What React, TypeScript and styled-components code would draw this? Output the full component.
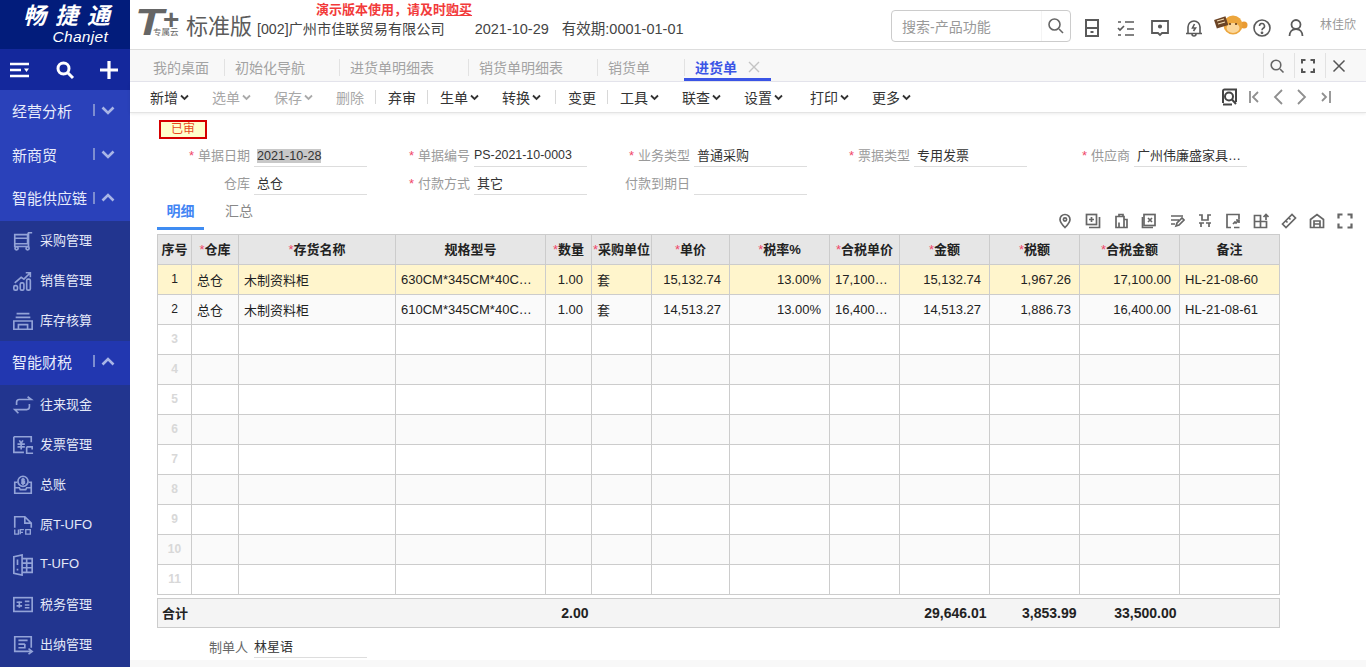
import React from 'react';
import styled, { createGlobalStyle } from 'styled-components';

const Global = createGlobalStyle`
  html, body { margin: 0; padding: 0; height: 100%; overflow: hidden; background: #fff; }
  body { font-family: "Liberation Sans", "Noto Sans CJK SC", sans-serif; font-size: 13px; color: #333; }
  #root { height: 100%; }
  * { box-sizing: border-box; }
`;

const Page = styled.div`display: flex; width: 1366px; height: 667px; overflow: hidden;`;

/* ---------- Sidebar ---------- */
const Sidebar = styled.aside`width: 130px; flex: none; background: #22358f; display: flex; flex-direction: column; color: #e6eafa;`;
const BrandBox = styled.div`
  height: 49px; background: #021c7b; color: #fff; display: flex; flex-direction: column; align-items: flex-end; padding: 3px 20px 0 0;
`;
const BrandCn = styled.div`font-size: 23px; line-height: 26px; font-style: italic; letter-spacing: 9px; margin-right: -9px; font-weight: 700; white-space: nowrap;`;
const BrandEn = styled.div`font-size: 15.500px; line-height: 15px; font-style: italic; margin-right: 2px; letter-spacing: 0.3px;`;
const ToolStrip = styled.div`height: 41px; background: #14289c; display: flex; align-items: center; justify-content: space-between; padding: 0 11px 0 10px;`;
const GroupRow = styled.div<{ $h: number; $bg: string }>`
  height: ${p => p.$h}px; background: ${p => p.$bg}; display: flex; align-items: center; padding: 0 15px 4px 12px; font-size: 15px; color: #e8ecfb;
`;
const GroupName = styled.span`flex: 1; white-space: nowrap;`;
const GroupDivider = styled.i`width: 2px; height: 12px; background: #7d8dd0; margin-right: 6px;`;
const SubRow = styled.div`height: 40px; display: flex; align-items: center; padding: 0 0 4px 12px; font-size: 13px; color: #e4e8f8; gap: 6px; white-space: nowrap;`;
const SubIcon = styled.svg`width: 22px; height: 22px; flex: none; fill: none; stroke: #93a3d8; stroke-width: 1.800; margin-top: 4px;`;

/* ---------- Main ---------- */
const Main = styled.main`flex: 1; min-width: 0; display: flex; flex-direction: column;`;
const Header = styled.header`height: 49px; flex: none; display: flex; align-items: flex-start; position: relative; background: #fff;`;
const TLogo = styled.div`width: 52px; margin-left: 5px; height: 36px; position: relative; flex: none; color: #666; margin-top: 7px;`;
const TLetter = styled.span`font: italic 700 36px/32px "Liberation Sans", sans-serif; color: #666; position: absolute; left: 0; top: 0; transform: scaleX(1.300); transform-origin: left center;`;
const TPlus = styled.span`font: 900 28px/20px "Liberation Sans", sans-serif; color: #666; position: absolute; left: 28px; top: 3px;`;
const TTag = styled.span`font-size: 8.500px; line-height: 9px; color: #666; position: absolute; left: 18px; top: 21px; white-space: nowrap;`;
const Edition = styled.div`font-size: 22px; line-height: 26px; color: #5c5c5c; margin: 14px 0 0 -1px; white-space: nowrap;`;
const InfoBlock = styled.div`margin-left: 5px; padding-top: 19px; font-size: 14.200px; line-height: 20px; color: #444; white-space: nowrap; display: flex;`;
const InfoDate = styled.span<{ $ml: number }>`margin-left: ${p => p.$ml}px; font-size: 14.500px;`;
const DemoNote = styled.div`position: absolute; left: 186px; top: 2px; color: #f23a3a; font-size: 13px; font-weight: 700; line-height: 16px; white-space: nowrap;`;
const DemoLink = styled.u``;
const HeaderRight = styled.div`margin-left: auto; display: flex; align-items: center; height: 49px; padding: 3px 10px 0 0;`;
const SearchBox = styled.div`
  width: 180px; height: 32px; border: 1px solid #ccc; border-radius: 4px; display: flex; align-items: center; padding-left: 10px; color: #999; font-size: 14px; margin-right: 11px;
`;
const SearchText = styled.span`flex: 1;`;
const SearchBtn = styled.div`width: 29px; height: 30px; display: flex; align-items: center; justify-content: center; border-left: 1px solid #f4f4f4;`;
const HeadIcon = styled.svg<{ $mr?: number }>`width: 20px; height: 20px; flex: none; fill: none; stroke: #5a5a5a; stroke-width: 1.600; margin: 3px ${p => p.$mr ?? 14}px 0 0;`;
const UserName = styled.span`font-size: 12px; color: #999; margin: -5px 0 0 14px; white-space: nowrap;`;

const TabBar = styled.nav`height: 33px; flex: none; background: #f8f8f8; border-top: 1px solid #ddd; border-bottom: 1px solid #e6e6ee; display: flex; align-items: stretch; padding-left: 23px; position: relative;`;
const Tab = styled.div<{ $w: number; $active?: boolean }>`
  width: ${p => p.$w}px; flex: none; display: flex; align-items: center; padding: 5px 0 0 11px; font-size: 14px; white-space: nowrap;
  color: ${p => (p.$active ? '#3b55e6' : '#a3a3a3')}; font-weight: ${p => (p.$active ? 700 : 400)}; position: relative;
  border-bottom: ${p => (p.$active ? '3px solid #3b55e6' : '3px solid transparent')};
  &::before { content: ''; position: absolute; left: 0; top: 9px; height: 17px; width: 1px; background: #e2e2e2; }
  &:first-child { padding-left: 0; width: 71px; }
  &:first-child::before { display: none; }
`;
const TabClose = styled.span`margin-left: 11px; display: flex;`;
const TabTools = styled.div`margin-left: auto; display: flex; padding-right: 10px; align-items: center;`;
const TabTool = styled.div`width: 31px; height: 25px; border-left: 1px solid #e2e2e2; display: flex; align-items: center; justify-content: center; padding-right: 4px;`;

const Toolbar = styled.div`height: 31px; flex: none; background: #fff; display: flex; align-items: center; padding-left: 20px; border-bottom: 1px solid #e4e4e4; box-shadow: 0 1px 3px rgba(0,0,0,.08); position: relative; z-index: 1;`;
const ToolItem = styled.div<{ $off?: boolean; $mr?: number }>`
  display: flex; align-items: center; gap: 2px; font-size: 14px; white-space: nowrap; color: ${p => (p.$off ? '#a8a8a8' : '#333')}; margin-right: ${p => p.$mr ?? 23}px;
`;
const ToolSep = styled.i`width: 1px; height: 14px; background: #d8d8d8; margin-right: 12px;`;
const PagerBox = styled.div`margin-left: auto; display: flex; align-items: center; gap: 8px; padding-right: 32px;`;
const Chevron = styled.svg<{ $off?: boolean }>`width: 9px; height: 7px; fill: none; stroke: ${p => (p.$off ? '#aaa' : '#333')}; stroke-width: 1.800;`;
const PagerIcon = styled.svg`width: 16px; height: 18px; fill: none; stroke: #8f8f8f; stroke-width: 1.800;`;

const Content = styled.section`flex: 1; min-height: 0; padding: 7px 0 0 27px; background: #fff; overflow: hidden;`;
const Stamp = styled.div`
  width: 48px; height: 19px; margin-left: 2px; border: 2px solid #d60000; background: #ffffcc; color: #e8471c; font-size: 12px; line-height: 15px; text-align: center;
`;
const FormGrid = styled.div`display: grid; grid-template-columns: repeat(5, 220px); grid-auto-rows: 24px; row-gap: 4px; margin: 4px 0 0 -10px;`;
const Field = styled.div`display: flex; align-items: flex-end; height: 24px;`;
const FieldLabel = styled.label`width: 103px; flex: none; text-align: right; font-size: 13px; color: #9a9a9a; line-height: 22px; white-space: nowrap;`;
const Star = styled.span`color: #f0476a; margin-right: 4px;`;
const FieldValue = styled.div<{ $small?: boolean }>`
  width: 113px; margin-left: 4px; height: 24px; border-bottom: 1px solid #ddd;
  padding: ${p => (p.$small ? '3px 0 0 0' : '4px 0 0 3px')}; font-size: ${p => (p.$small ? 12.400 : 13)}px; line-height: 18px; color: #333; white-space: nowrap; overflow: hidden; text-overflow: ellipsis;
`;
const Selected = styled.span`background: #c8c8c8; color: #333; font-size: 12.600px;`;

const TabStrip = styled.div`height: 31px; margin-top: 4px; display: flex; padding-right: 13px; align-items: flex-end;`;
const DetailTab = styled.div<{ $on?: boolean }>`
  width: ${p => (p.$on ? 47 : 48)}px; margin-right: ${p => (p.$on ? 21 : 0)}px; height: 27px; padding-bottom: 7px; font-size: 14px; line-height: 17px; text-align: ${p => (p.$on ? 'center' : 'left')}; color: ${p => (p.$on ? '#4285f4' : '#888')}; font-weight: ${p => (p.$on ? 700 : 400)};
  border-bottom: ${p => (p.$on ? '3px solid #3f8cf2' : '3px solid transparent')};
`;
const GridTools = styled.div`margin-left: auto; display: flex; gap: 12px; padding-bottom: 1px; align-self: flex-end;`;
const ToolGlyph = styled.svg`width: 16px; height: 16px; fill: none; stroke: #666; stroke-width: 1.700;`;

const DataTable = styled.table`width: 1123px; table-layout: fixed; border-collapse: collapse; margin-top: 4px; font-size: 13px; color: #222;`;
const Th = styled.th`height: 30px; background: #e6e6e6; border: 1px solid #ccc; padding: 0 0 2px; font-weight: 700; font-size: 13px; color: #222; white-space: nowrap; overflow: hidden;`;
const HStar = styled.span`color: #f0476a; font-weight: 400;`;
const Tr = styled.tr<{ $bg: string }>`background: ${p => p.$bg};`;
const Td = styled.td<{ $align?: string }>`
  height: 30px; border: 1px solid #ccc; padding: 0 ${p => (p.$align === 'right' ? 8 : 5)}px 1px 5px; text-align: ${p => p.$align ?? 'left'}; font-size: 13px; white-space: nowrap; overflow: hidden; text-overflow: ellipsis; color: #222;
`;
const NumCell = styled.td<{ $dim?: boolean }>`
  height: 30px; border: 1px solid #ccc; padding: 0 0 1px; text-align: center; font-size: 12px; color: ${p => (p.$dim ? '#d8d8d8' : '#222')}; font-weight: ${p => (p.$dim ? 700 : 400)};
`;
const TotalTable = styled.table`width: 1123px; table-layout: fixed; border-collapse: collapse; margin-top: 3px; background: #f4f4f4; border: 1px solid #ccc;`;
const TotalCell = styled.td`
  height: 29px; padding: 0 2px 1px 4px; text-align: left; font-size: 13px; font-weight: 700; color: #222; white-space: nowrap;
`;
const TotalNum = styled(TotalCell)`text-align: right; font-size: 14px; padding-right: 3px;`;
const FooterField = styled.div`display: flex; align-items: flex-end; margin: 9px 0 0 0; height: 21px;`;
const FooterLabel = styled.span`width: 91px; text-align: right; font-size: 13px; color: #666; line-height: 18px; padding-bottom: 1px;`;
const FooterValue = styled.div`width: 113px; margin-left: 6px; border-bottom: 1px solid #ddd; font-size: 13px; color: #333; line-height: 20px; height: 21px;`;
const BottomStrip = styled.div`height: 7px; flex: none; background: #f8f8f8;`;

const MonkeyBox = styled.svg`width: 34px; height: 24px; flex: none; margin: 0 4px 0 2px;`;

/* ---------- Small drawings ---------- */
const Down = ({ off }: { off?: boolean }) => <Chevron $off={off} viewBox="0 0 9 7"><path d="M1 1.500l3.500 3.500L8 1.500" /></Chevron>;
const G = styled.svg`width: 14px; height: 9px; fill: none; stroke: #a9b5e6; stroke-width: 2.600;`;
const GroupChev = ({ up }: { up?: boolean }) => <G viewBox="0 0 14 9"><path d={up ? 'M1.500 7.500L7 2l5.500 5.500' : 'M1.500 1.500L7 7l5.500-5.500'} /></G>;

const subIcons: Record<string, React.ReactNode> = {
  cart: <><path d="M3 5h14v10H3zM3 9h14M17 5l1-2h4M3 15v3h15v-15" /><circle cx="5" cy="20" r="1.700" /><circle cx="17" cy="20" r="1.700" /></>,
  chart: <><path d="M3 14l7-6 3 2 7-7M15 3h5v5" /><rect x="2" y="17" width="4" height="5" rx="1.500" /><rect x="9" y="14" width="4" height="8" rx="1.500" /><rect x="16" y="10" width="4" height="12" rx="1.500" /></>,
  stock: <><path d="M5 4h14M4 8h16M2 12h20v9H2zM7 21v-5h10v5" /></>,
  loop: <><path d="M5 12V9a3 3 0 0 1 3-3h13l-4-3M19 11v3a3 3 0 0 1-3 3H3l4 4" /></>,
  inv: <><path d="M2 3h19v6M2 3v17h11M8 7l2 3 2-3M6 11h8M6 14h8M10 10v7M16 14h6v3M16 14v7h7" /></>,
  ledger: <><path d="M6 9H3v12h18V9h-3M3 15h5l1 2h6l1-2h5" /><circle cx="12" cy="8" r="5.500" /><path d="M14 6h-3v2h2.500v2H10M12 4v8" /></>,
  ufo: <><path d="M3 15V3h11l7 7v5M14 3v7h7" /><path d="M3 17v5h4v-5M9 22v-5h4M9 20h3M15 17h5v5h-5z" strokeWidth="1.500" /></>,
  tufo: <><path d="M2 3l9-2v22l-9-2zM11 5h11v15H11M11 10h11M11 15h11M16 5v15M6 6v6M6 16v2" /></>,
  tax: <><rect x="2" y="4" width="20" height="15" /><path d="M5 9h6M5 13h6M14 8h5M14 12h5M14 15h5M8 8v7" /></>,
  cash: <><path d="M21 15V3H3v16h12M7 7h10M7 11h7M7 15h7v-4M15 19h7M18 16l4 3-4 3" /></>,
};
const SubItem = ({ icon, label }: { icon: string; label: string }) => (
  <SubRow><SubIcon viewBox="0 0 24 24">{subIcons[icon]}</SubIcon>{label}</SubRow>
);

const gridIcons = [
  <><path d="M8 1.500a5 5 0 0 1 5 5c0 3-5 8-5 8s-5-5-5-8a5 5 0 0 1 5-5z" /><circle cx="8" cy="6.500" r="1.600" /></>,
  <><rect x="1.500" y="1.500" width="10" height="10" /><path d="M4 14.500h10.500V4M4 6.500h5M6.500 4v5" /></>,
  <><path d="M6 3.500V1.500h4v2M3 3.500h8v11H3zM11 6.500h3v8H6v-5" /></>,
  <><rect x="3" y="1.500" width="11" height="11" /><path d="M1.500 4v10.500H12M7 5l4 4M11 5L7 9" /></>,
  <><path d="M2 3h12M2 7h8M2 11h4M7 13l1-3 5-5 2 2-5 5z" /></>,
  <><path d="M2 2h3v5h6V2h3M2 10h5M9 10h5M4 14v-4M12 14v-4" /></>,
  <><path d="M14 6V1.500H2v13h4M8 11l2-2 1 1 3-3M11 7h3v3M9 14.500h5.500" /></>,
  <><path d="M1.500 2.500h6v12h-6zM1.500 8.500h12v6h-6M13 7V1.500M10.500 4L13 1.500 15.500 4" /></>,
  <><path d="M1.500 11L11 1.500l3.500 3.500L5 14.500zM5 8l1.500 1.500M8 5l1.500 1.500" /></>,
  <><path d="M1.500 6.500L8 1.500l6.500 5v8h-13zM5 8h6v6.500H5zM5 11h6" /></>,
  <><path d="M1.500 5.500v-4h4M10.500 1.500h4v4M14.500 10.500v4h-4M5.500 14.500h-4v-4" strokeWidth="2.200" /></>,
];

const groups = [
  { n: '经营分析', h: 44, bg: '#2a41ba' },
  { n: '新商贸', h: 44, bg: '#2a41ba' },
  { n: '智能供应链', h: 43, bg: '#2a41ba', up: true },
];

const cols = [34, 47, 157, 150, 46, 60, 78, 100, 70, 90, 90, 100, 100];
const heads: [string, boolean][] = [
  ['序号', false], ['仓库', true], ['存货名称', true], ['规格型号', false], ['数量', true], ['采购单位', true], ['单价', true],
  ['税率%', true], ['合税单价', true], ['金额', true], ['税额', true], ['合税金额', true], ['备注', false],
];
const rows = [
  ['总仓', '木制资料柜', '630CM*345CM*40CM*80', '1.00', '套', '15,132.74', '13.00%', '17,100.000', '15,132.74', '1,967.26', '17,100.00', 'HL-21-08-60'],
  ['总仓', '木制资料柜', '610CM*345CM*40CM*80', '1.00', '套', '14,513.27', '13.00%', '16,400.000', '14,513.27', '1,886.73', '16,400.00', 'HL-21-08-61'],
];
const rightCols = new Set([3, 5, 6, 7, 8, 9, 10]);

const tabs: [string, number][] = [['我的桌面', 71], ['初始化导航', 115], ['进货单明细表', 129], ['销货单明细表', 129], ['销货单', 87]];
const tools: { t: string; off?: boolean; chev?: boolean; mr?: number; sep?: boolean }[] = [
  { t: '新增', chev: true }, { t: '选单', off: true, chev: true }, { t: '保存', off: true, chev: true }, { t: '删除', off: true, mr: 11 }, { t: '', sep: true },
  { t: '弃审', mr: 11 }, { t: '', sep: true }, { t: '生单', chev: true }, { t: '转换', chev: true, mr: 14 }, { t: '', sep: true },
  { t: '变更', mr: 11 }, { t: '', sep: true }, { t: '工具', chev: true }, { t: '联查', chev: true }, { t: '设置', chev: true, mr: 27 }, { t: '打印', chev: true }, { t: '更多', chev: true },
];

type F = { label: string; req?: boolean; value?: React.ReactNode; small?: boolean };
const fields: F[] = [
  { label: '单据日期', req: true, value: <Selected>2021-10-28</Selected> },
  { label: '单据编号', req: true, value: 'PS-2021-10-0003', small: true },
  { label: '业务类型', req: true, value: '普通采购' },
  { label: '票据类型', req: true, value: '专用发票' },
  { label: '供应商', req: true, value: '广州伟廉盛家具有限公司' },
  { label: '仓库', value: '总仓' },
  { label: '付款方式', req: true, value: '其它' },
  { label: '付款到期日' },
];

const Colgroup = () => <colgroup>{cols.map((w, i) => <col key={i} style={{ width: w }} />)}</colgroup>;

export default function App() {
  return (
    <Page>
      <Global />
      <Sidebar>
        <BrandBox><BrandCn>畅捷通</BrandCn><BrandEn>Chanjet</BrandEn></BrandBox>
        <ToolStrip>
          <svg width="20" height="16" viewBox="0 0 20 16" fill="none" stroke="#fff" strokeWidth="2.400"><path d="M0 2h19M0 8h11M0 14h19" /><path d="M14 6.500h5L16.500 10z" fill="#fff" stroke="none" /></svg>
          <svg width="20" height="20" viewBox="0 0 20 20" fill="none" stroke="#fff" strokeWidth="3"><circle cx="8.500" cy="8.500" r="5.500" /><path d="M13 13l5 5" /></svg>
          <svg width="20" height="20" viewBox="0 0 20 20" fill="none" stroke="#fff" strokeWidth="3.200"><path d="M10 1v18M1 10h18" /></svg>
        </ToolStrip>
        {groups.map(g => (
          <GroupRow key={g.n} $h={g.h} $bg={g.bg}><GroupName>{g.n}</GroupName><GroupDivider /><GroupChev up={g.up} /></GroupRow>
        ))}
        <SubItem icon="cart" label="采购管理" />
        <SubItem icon="chart" label="销售管理" />
        <SubItem icon="stock" label="库存核算" />
        <GroupRow $h={44} $bg="#2237b0"><GroupName>智能财税</GroupName><GroupDivider /><GroupChev up /></GroupRow>
        <SubItem icon="loop" label="往来现金" />
        <SubItem icon="inv" label="发票管理" />
        <SubItem icon="ledger" label="总账" />
        <SubItem icon="ufo" label="原T-UFO" />
        <SubItem icon="tufo" label="T-UFO" />
        <SubItem icon="tax" label="税务管理" />
        <SubItem icon="cash" label="出纳管理" />
      </Sidebar>
      <Main>
        <Header>
          <TLogo><TLetter>T</TLetter><TPlus>+</TPlus><TTag>专属云</TTag></TLogo>
          <Edition>标准版</Edition>
          <InfoBlock>
            [002]广州市佳联贸易有限公司
            <InfoDate $ml={30}>2021-10-29</InfoDate>
            <InfoDate $ml={13}>有效期:0001-01-01</InfoDate>
          </InfoBlock>
          <DemoNote>演示版本使用，请及时<DemoLink>购买</DemoLink></DemoNote>
          <HeaderRight>
            <SearchBox>
              <SearchText>搜索-产品功能</SearchText>
              <SearchBtn>
                <svg width="18" height="18" viewBox="0 0 18 18" fill="none" stroke="#666" strokeWidth="1.600"><circle cx="7.500" cy="7.500" r="5.500" /><path d="M12 12l4 4" /></svg>
              </SearchBtn>
            </SearchBox>
            <HeadIcon viewBox="0 0 20 20"><rect x="4" y="2" width="12" height="16" strokeWidth="2" /><path d="M4 10h12M8.500 14h3" strokeWidth="2" /></HeadIcon>
            <HeadIcon viewBox="0 0 20 20"><path d="M9 4h9M2 10l2 2 4-4M11 11h7M9 17h9M2 4h3M2 17h3" strokeWidth="1.700" /></HeadIcon>
            <HeadIcon viewBox="0 0 20 20"><path d="M2 3h16v12h-6l-2 2-2-2H2z" strokeWidth="1.800" /><circle cx="10" cy="8.500" r="1.300" fill="#5a5a5a" /></HeadIcon>
            <HeadIcon $mr={8} viewBox="0 0 20 20"><path d="M4 15V9a6 6 0 0 1 12 0v6M2 15.500h16M8 16a2 2 0 0 0 4 0M10.500 6L8.500 10h3l-2 3" /></HeadIcon>
            <MonkeyBox viewBox="0 0 34 24">
              <circle cx="30" cy="11" r="3.500" fill="#e99a32" /><circle cx="19" cy="11" r="9.500" fill="#eca63d" />
              <ellipse cx="19" cy="14" rx="6.500" ry="5" fill="#fbd79b" /><circle cx="16" cy="10" r="1" fill="#5b3413" /><circle cx="22" cy="10" r="1" fill="#5b3413" />
              <rect x="1" y="4" width="12" height="9" transform="rotate(-18 7 8)" fill="#6b4426" /><path d="M3 7l7-2M4 10l7-2" stroke="#f5dfb8" strokeWidth="1.200" />
            </MonkeyBox>
            <HeadIcon $mr={14} viewBox="0 0 20 20"><circle cx="10" cy="10" r="8" /><path d="M7.500 8a2.500 2.500 0 1 1 3.700 2.200c-.8.500-1.200 1-1.200 2" /><circle cx="10" cy="14.800" r=".6" fill="#5a5a5a" /></HeadIcon>
            <HeadIcon $mr={0} viewBox="0 0 20 20"><circle cx="10" cy="6.500" r="4.500" strokeWidth="1.800" /><path d="M3.500 18c0-4 2.500-7 6.500-7s6.500 3 6.500 7" strokeWidth="1.800" /></HeadIcon>
            <UserName>林佳欣</UserName>
          </HeaderRight>
        </Header>
        <TabBar>
          {tabs.map(([t, w]) => <Tab key={t} $w={w}>{t}</Tab>)}
          <Tab $w={87} $active>进货单<TabClose>
            <svg width="12" height="12" viewBox="0 0 12 12" stroke="#c4c4c4" strokeWidth="1.400"><path d="M1 1l10 10M11 1L1 11" /></svg>
          </TabClose></Tab>
          <TabTools>
            <TabTool><svg width="16" height="16" viewBox="0 0 16 16" fill="none" stroke="#666" strokeWidth="1.600"><circle cx="7" cy="7" r="4.800" /><path d="M11 11l3.500 3.500" /></svg></TabTool>
            <TabTool><svg width="14" height="14" viewBox="0 0 14 14" fill="none" stroke="#555" strokeWidth="2"><path d="M1 4.500V1h3.500M9.500 1H13v3.500M13 9.500V13H9.500M4.500 13H1V9.500" /></svg></TabTool>
            <TabTool><svg width="14" height="14" viewBox="0 0 14 14" stroke="#555" strokeWidth="1.500"><path d="M1.500 1.500l11 11M12.500 1.500l-11 11" /></svg></TabTool>
          </TabTools>
        </TabBar>
        <Toolbar>
          {tools.map((t, i) => t.sep ? <ToolSep key={i} /> : (
            <ToolItem key={i} $off={t.off} $mr={t.mr}>{t.t}{t.chev && <Down off={t.off} />}</ToolItem>
          ))}
          <PagerBox>
            <svg width="18" height="18" viewBox="0 0 18 18" fill="none" stroke="#444" strokeWidth="2"><path d="M3 15V3a1.500 1.500 0 0 1 1.500-1.500H16V14" /><circle cx="9" cy="8.500" r="4" /><path d="M12 11.500l4 4.500M3 16.500h9" /></svg>
            <PagerIcon viewBox="0 0 16 18"><path d="M4 3v12M12 4L7 9l5 5" /></PagerIcon>
            <PagerIcon viewBox="0 0 16 18"><path d="M12 2L5 9l7 7" /></PagerIcon>
            <PagerIcon viewBox="0 0 16 18"><path d="M4 2l7 7-7 7" /></PagerIcon>
            <PagerIcon viewBox="0 0 16 18"><path d="M12 3v12M4 5l4 4-4 4" /></PagerIcon>
          </PagerBox>
        </Toolbar>
        <Content>
          <Stamp>已审</Stamp>
          <FormGrid>
            {fields.map(f => (
              <Field key={f.label}>
                <FieldLabel>{f.req && <Star>*</Star>}{f.label}</FieldLabel>
                <FieldValue $small={f.small}>{f.value}</FieldValue>
              </Field>
            ))}
          </FormGrid>
          <TabStrip>
            <DetailTab $on>明细</DetailTab>
            <DetailTab>汇总</DetailTab>
            <GridTools>
              {gridIcons.map((ic, i) => <ToolGlyph key={i} viewBox="0 0 16 16">{ic}</ToolGlyph>)}
            </GridTools>
          </TabStrip>
          <DataTable>
            <Colgroup />
            <thead>
              <tr>{heads.map(([h, req]) => <Th key={h}>{req && <HStar>*</HStar>}{h}</Th>)}</tr>
            </thead>
            <tbody>
              {Array.from({ length: 11 }, (_, i) => {
                const row = rows[i];
                const bg = i === 0 ? '#fff5cc' : i % 2 === 1 ? '#fafafa' : '#fff';
                return (
                  <Tr key={i} $bg={bg}>
                    <NumCell $dim={!row}>{i + 1}</NumCell>
                    {row
                      ? row.map((c, j) => <Td key={j} $align={rightCols.has(j) ? 'right' : 'left'}>{c}</Td>)
                      : cols.slice(1).map((_, j) => <Td key={j} />)}
                  </Tr>
                );
              })}
            </tbody>
          </DataTable>
          <TotalTable>
            <Colgroup />
            <tbody>
              <tr>
                <TotalCell colSpan={2}>合计</TotalCell>
                <TotalCell colSpan={2} />
                <TotalNum>2.00</TotalNum>
                <TotalCell colSpan={4} />
                <TotalNum>29,646.01</TotalNum>
                <TotalNum>3,853.99</TotalNum>
                <TotalNum>33,500.00</TotalNum>
                <TotalCell />
              </tr>
            </tbody>
          </TotalTable>
          <FooterField><FooterLabel>制单人</FooterLabel><FooterValue>林星语</FooterValue></FooterField>
        </Content>
        <BottomStrip />
      </Main>
    </Page>
  );
}
